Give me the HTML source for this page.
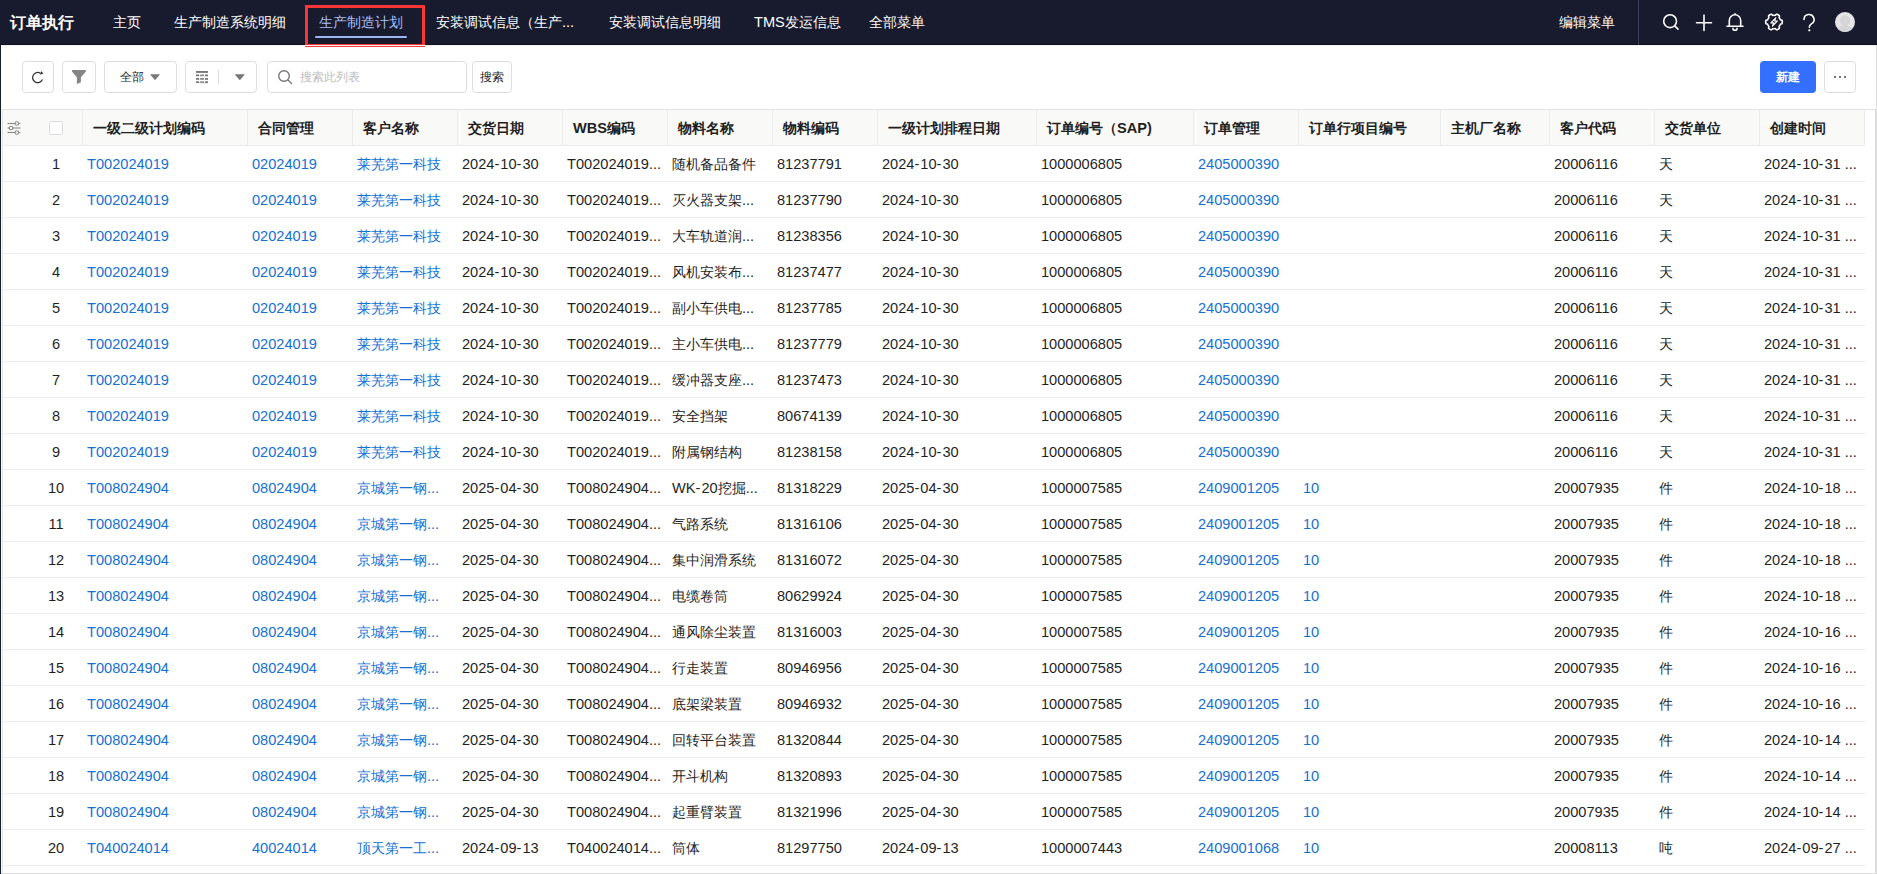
<!DOCTYPE html><html><head><meta charset="utf-8"><style>
*{box-sizing:border-box;margin:0;padding:0}
html,body{width:1877px;height:874px;overflow:hidden;background:#fff;font-family:"Liberation Sans",sans-serif;color:#1f1f1f}
#nav{position:absolute;left:0;top:0;width:1877px;height:45px;background:#181a2d;border-bottom:1px solid #0e1020}
.ni{position:absolute;top:0;height:44px;line-height:44px;font-size:14px;color:#fff;white-space:nowrap;font-weight:500}
.ni .l{font-weight:normal}
.ni .l{font-size:14.6px}
#logo{position:absolute;left:10px;top:0.8px;height:44px;line-height:44px;font-size:16px;font-weight:bold;color:#fff}
#act{color:#a8bff5}
#uline{position:absolute;left:315px;top:35.5px;width:92px;height:2.5px;border-radius:2px;background:#9db6f2}
#redbox{position:absolute;left:305px;top:5px;width:120px;height:42px;border:3px solid #f93636}
#vdiv{position:absolute;left:1638px;top:0;width:1px;height:45px;background:#3b3e56}
#lstrip{position:absolute;left:0;top:45px;width:1px;height:829px;background:#181a2d}
#rbar{position:absolute;left:1875px;top:109px;width:2px;height:765px;background:#dcdcdc}
#rbar2{position:absolute;left:1876px;top:45px;width:1px;height:64px;background:#dcdcdc}
#tline{position:absolute;left:1px;top:45px;width:1875px;height:1px;background:#f2f1ef}
#ttop{position:absolute;left:2px;top:109px;width:1873px;height:1px;background:#e3e3e3}
#hend{position:absolute;left:1864px;top:110px;width:1px;height:35px;background:#ebebeb}
#bbar{position:absolute;left:1px;top:873px;width:1876px;height:1px;background:#dcdcdc}
.btn{position:absolute;top:61px;height:32px;border:1px solid #dedede;border-radius:4px;background:#fff}
.btxt{position:absolute;font-size:12px;line-height:32px;top:-1px;color:#1f1f1f;white-space:nowrap;font-weight:500}
#newbtn{position:absolute;left:1760px;top:61px;width:56px;height:32px;border-radius:4px;background:#3370ff;color:#fff;font-size:12px;line-height:32px;text-align:center;font-weight:bold}
#tbl{position:absolute;left:2px;top:109px;width:1862px;height:757px}
#thead{position:absolute;left:0;top:0;width:1862px;height:37px;background:#f9f9f8;border-top:1px solid #e3e3e3;border-left:1px solid #e3e3e3;border-bottom:1px solid #ebebeb}
.hs{position:absolute;top:0px;width:1px;height:35px;background:#ebebeb}
.hc{position:absolute;top:1px;height:35px;line-height:35px;font-size:14px;font-weight:bold;color:#1f1f1f;white-space:nowrap}
.hc .l{font-size:14.6px}
.row{position:absolute;left:1px;width:1862px;height:36px;border-bottom:1px solid #ececec}
#tleft{position:absolute;left:2px;top:109px;width:1px;height:765px;background:#e3e3e3}
.c{position:absolute;top:0;height:35px;line-height:36px;font-size:14px;font-weight:500;white-space:nowrap;overflow:hidden;color:#1f1f1f}
.c .l{font-size:14.6px;font-weight:normal}
.h{letter-spacing:1px}
.c.a{color:#1570d2}
.idx{position:absolute;left:27px;width:52px;top:0;height:35px;line-height:36px;text-align:center;font-size:14.6px;color:#1f1f1f}
</style></head><body>
<div id="nav">
<div id="logo">订单执行</div>
<div class="ni" style="left:113px">主页</div>
<div class="ni" style="left:174px">生产制造系统明细</div>
<div class="ni" id="act" style="left:319px">生产制造计划</div>
<div class="ni" style="left:436px">安装调试信息（生产<span class="l">...</span></div>
<div class="ni" style="left:609px">安装调试信息明细</div>
<div class="ni" style="left:754px"><span class="l">TMS</span>发运信息</div>
<div class="ni" style="left:869px">全部菜单</div>
<div class="ni" style="left:1559px">编辑菜单</div>
<div id="uline"></div><div id="redbox"></div><div id="vdiv"></div>
<svg style="position:absolute;left:0;top:0" width="1877" height="45" viewBox="0 0 1877 45">
<g fill="none" stroke="#fff" stroke-width="1.6" stroke-linecap="round">
<circle cx="1670.1" cy="21.2" r="6.4"/><line x1="1674.8" y1="25.9" x2="1678" y2="29.1"/>
<line x1="1704" y1="15.3" x2="1704" y2="30.5"/><line x1="1696.5" y1="22.8" x2="1711.5" y2="22.8"/>
<path d="M1729.3 26 V20.5 a5.7 5.7 0 0 1 11.4 0 V26 M1727 26.3 H1743 M1733 28.4 a2 1.8 0 0 0 4 0 M1735 13.8 V14.8"/>
<path d="M1804 19.5 a5 5 0 1 1 7.4 4.4 c-1.6 0.9 -2.1 1.8 -2.1 3.4"/>
</g>
<circle cx="1809.3" cy="30.3" r="1.1" fill="#fff"/>
<path id="gear" d="M1782.30 22.00 L1782.30 22.22 L1782.29 22.43 L1782.27 22.65 L1782.25 22.87 L1782.22 23.08 L1782.17 23.29 L1782.10 23.50 L1781.96 23.69 L1781.68 23.84 L1781.24 23.94 L1780.81 24.02 L1780.53 24.12 L1780.37 24.26 L1780.28 24.41 L1780.20 24.57 L1780.12 24.73 L1780.05 24.89 L1779.97 25.04 L1779.89 25.20 L1779.80 25.35 L1779.71 25.50 L1779.62 25.65 L1779.52 25.80 L1779.42 25.94 L1779.32 26.08 L1779.23 26.23 L1779.14 26.39 L1779.10 26.59 L1779.15 26.89 L1779.30 27.30 L1779.44 27.73 L1779.44 28.05 L1779.35 28.26 L1779.21 28.43 L1779.05 28.58 L1778.88 28.71 L1778.70 28.84 L1778.52 28.96 L1778.34 29.08 L1778.15 29.19 L1777.96 29.29 L1777.77 29.39 L1777.57 29.49 L1777.37 29.58 L1777.17 29.66 L1776.97 29.73 L1776.75 29.76 L1776.51 29.74 L1776.24 29.57 L1775.94 29.24 L1775.66 28.90 L1775.43 28.71 L1775.23 28.65 L1775.05 28.64 L1774.88 28.65 L1774.70 28.67 L1774.53 28.68 L1774.35 28.69 L1774.18 28.70 L1774.00 28.70 L1773.82 28.70 L1773.65 28.69 L1773.47 28.68 L1773.30 28.67 L1773.12 28.65 L1772.95 28.64 L1772.77 28.65 L1772.57 28.71 L1772.34 28.90 L1772.06 29.24 L1771.76 29.57 L1771.49 29.74 L1771.25 29.76 L1771.03 29.73 L1770.83 29.66 L1770.63 29.58 L1770.43 29.49 L1770.23 29.39 L1770.04 29.29 L1769.85 29.19 L1769.66 29.08 L1769.48 28.96 L1769.30 28.84 L1769.12 28.71 L1768.95 28.58 L1768.79 28.43 L1768.65 28.26 L1768.56 28.05 L1768.56 27.73 L1768.70 27.30 L1768.85 26.89 L1768.90 26.59 L1768.86 26.39 L1768.77 26.23 L1768.68 26.08 L1768.58 25.94 L1768.48 25.80 L1768.38 25.65 L1768.29 25.50 L1768.20 25.35 L1768.11 25.20 L1768.03 25.04 L1767.95 24.89 L1767.88 24.73 L1767.80 24.57 L1767.72 24.41 L1767.63 24.26 L1767.47 24.12 L1767.19 24.02 L1766.76 23.94 L1766.32 23.84 L1766.04 23.69 L1765.90 23.50 L1765.83 23.29 L1765.78 23.08 L1765.75 22.87 L1765.73 22.65 L1765.71 22.43 L1765.70 22.22 L1765.70 22.00 L1765.70 21.78 L1765.71 21.57 L1765.73 21.35 L1765.75 21.13 L1765.78 20.92 L1765.83 20.71 L1765.90 20.50 L1766.04 20.31 L1766.32 20.16 L1766.76 20.06 L1767.19 19.98 L1767.47 19.88 L1767.63 19.74 L1767.72 19.59 L1767.80 19.43 L1767.88 19.27 L1767.95 19.11 L1768.03 18.96 L1768.11 18.80 L1768.20 18.65 L1768.29 18.50 L1768.38 18.35 L1768.48 18.20 L1768.58 18.06 L1768.68 17.92 L1768.77 17.77 L1768.86 17.61 L1768.90 17.41 L1768.85 17.11 L1768.70 16.70 L1768.56 16.27 L1768.56 15.95 L1768.65 15.74 L1768.79 15.57 L1768.95 15.42 L1769.12 15.29 L1769.30 15.16 L1769.48 15.04 L1769.66 14.92 L1769.85 14.81 L1770.04 14.71 L1770.23 14.61 L1770.43 14.51 L1770.63 14.42 L1770.83 14.34 L1771.03 14.27 L1771.25 14.24 L1771.49 14.26 L1771.76 14.43 L1772.06 14.76 L1772.34 15.10 L1772.57 15.29 L1772.77 15.35 L1772.95 15.36 L1773.12 15.35 L1773.30 15.33 L1773.47 15.32 L1773.65 15.31 L1773.82 15.30 L1774.00 15.30 L1774.18 15.30 L1774.35 15.31 L1774.53 15.32 L1774.70 15.33 L1774.88 15.35 L1775.05 15.36 L1775.23 15.35 L1775.43 15.29 L1775.66 15.10 L1775.94 14.76 L1776.24 14.43 L1776.51 14.26 L1776.75 14.24 L1776.97 14.27 L1777.17 14.34 L1777.37 14.42 L1777.57 14.51 L1777.77 14.61 L1777.96 14.71 L1778.15 14.81 L1778.34 14.92 L1778.52 15.04 L1778.70 15.16 L1778.88 15.29 L1779.05 15.42 L1779.21 15.57 L1779.35 15.74 L1779.44 15.95 L1779.44 16.27 L1779.30 16.70 L1779.15 17.11 L1779.10 17.41 L1779.14 17.61 L1779.23 17.77 L1779.32 17.92 L1779.42 18.06 L1779.52 18.20 L1779.62 18.35 L1779.71 18.50 L1779.80 18.65 L1779.89 18.80 L1779.97 18.96 L1780.05 19.11 L1780.12 19.27 L1780.20 19.43 L1780.28 19.59 L1780.37 19.74 L1780.53 19.88 L1780.81 19.98 L1781.24 20.06 L1781.68 20.16 L1781.96 20.31 L1782.10 20.50 L1782.17 20.71 L1782.22 20.92 L1782.25 21.13 L1782.27 21.35 L1782.29 21.57 L1782.30 21.78 L1782.30 22.00Z" fill="none" stroke="#fff" stroke-width="1.6" stroke-linejoin="round"/>
<path d="M1775.8 17.8 L1770.9 22.9 L1773.7 22.9 L1772.4 26.2 L1777.3 21 L1774.5 21 Z" fill="none" stroke="#fff" stroke-width="1.2" stroke-linejoin="round"/>
<circle cx="1845" cy="22" r="10" fill="#e5e5e5"/>
<g fill="#d5d4d6"><circle cx="1845" cy="20.6" r="5"/><path d="M1837.67 28.81 A8.3 6.8 0 0 1 1852.33 28.81 A10 10 0 0 1 1837.67 28.81 Z"/></g>
</svg>
</div>
<div id="lstrip"></div><div id="rbar"></div><div id="rbar2"></div><div id="bbar"></div><div id="tline"></div><div id="ttop"></div><div id="hend"></div><div id="tleft"></div>
<div class="btn" style="left:22px;width:32px"></div>
<div class="btn" style="left:62px;width:34px"></div>
<div class="btn" style="left:104px;width:73px"><div class="btxt" style="left:15px">全部</div></div>
<div class="btn" style="left:185px;width:72px"></div>
<div class="btn" style="left:267px;width:200px"><div class="btxt" style="left:32px;color:#bdbdbd;font-weight:normal">搜索此列表</div></div>
<div class="btn" style="left:472px;width:40px"><div class="btxt" style="left:7px">搜索</div></div>
<div id="newbtn">新建</div>
<div class="btn" style="left:1824px;width:32px"></div>
<svg style="position:absolute;left:0;top:45px" width="1877" height="64" viewBox="0 45 1877 64">
<path d="M40.6 73.4 A5.1 5.1 0 1 0 42.4 79.6" fill="none" stroke="#333" stroke-width="1.25"/>
<path d="M41.4 71 L43.3 73.7 L39.9 74.5 Z" fill="#333"/>
<path d="M72.1 70.1 H85.8 V71.7 L80.9 77.3 V82.3 L76.9 83.9 V77.3 L72.1 71.7 Z" fill="#858585"/>
<path d="M150 74.2 H160 L155 80.2 Z" fill="#777"/>
<g fill="#777"><rect x="196" y="71" width="12" height="1.9"/><rect x="196" y="74.5" width="3.2" height="1.8"/><rect x="200.1" y="74.5" width="3.9" height="1.8" fill="#8c8c8c"/><rect x="204.9" y="74.5" width="3.1" height="1.8"/><rect x="196" y="78.0" width="3.2" height="1.8"/><rect x="200.1" y="78.0" width="3.9" height="1.8" fill="#8c8c8c"/><rect x="204.9" y="78.0" width="3.1" height="1.8"/><rect x="196" y="81.3" width="3.2" height="1.8"/><rect x="200.1" y="81.3" width="3.9" height="1.8" fill="#8c8c8c"/><rect x="204.9" y="81.3" width="3.1" height="1.8"/></g>
<rect x="218" y="70" width="1" height="14" fill="#ddd"/>
<path d="M234.6 74.2 H245 L239.8 80.2 Z" fill="#777"/>
<circle cx="284" cy="76" r="5.3" fill="none" stroke="#777" stroke-width="1.4"/>
<line x1="288" y1="80" x2="291.5" y2="83.5" stroke="#777" stroke-width="1.4" stroke-linecap="round"/>
<g fill="#555"><circle cx="1835" cy="77" r="1.1"/><circle cx="1840" cy="77" r="1.1"/><circle cx="1845" cy="77" r="1.1"/></g>
</svg>
<div id="tbl">
<div id="thead">
<div class="hs" style="left:79px"></div>
<div class="hc" style="left:90px">一级二级计划编码</div>
<div class="hs" style="left:244px"></div>
<div class="hc" style="left:255px">合同管理</div>
<div class="hs" style="left:349px"></div>
<div class="hc" style="left:360px">客户名称</div>
<div class="hs" style="left:454px"></div>
<div class="hc" style="left:465px">交货日期</div>
<div class="hs" style="left:559px"></div>
<div class="hc" style="left:570px"><span class="l">WBS</span>编码</div>
<div class="hs" style="left:664px"></div>
<div class="hc" style="left:675px">物料名称</div>
<div class="hs" style="left:769px"></div>
<div class="hc" style="left:780px">物料编码</div>
<div class="hs" style="left:874px"></div>
<div class="hc" style="left:885px">一级计划排程日期</div>
<div class="hs" style="left:1033px"></div>
<div class="hc" style="left:1044px">订单编号（<span class="l">SAP)</span></div>
<div class="hs" style="left:1190px"></div>
<div class="hc" style="left:1201px">订单管理</div>
<div class="hs" style="left:1295px"></div>
<div class="hc" style="left:1306px">订单行项目编号</div>
<div class="hs" style="left:1437px"></div>
<div class="hc" style="left:1448px">主机厂名称</div>
<div class="hs" style="left:1546px"></div>
<div class="hc" style="left:1557px">客户代码</div>
<div class="hs" style="left:1651px"></div>
<div class="hc" style="left:1662px">交货单位</div>
<div class="hs" style="left:1756px"></div>
<div class="hc" style="left:1767px">创建时间</div>
<svg style="position:absolute;left:-1px;top:-1px" width="80" height="37" viewBox="2 109 80 37">
<g stroke="#888" stroke-width="1.1" fill="none">
<line x1="7.5" y1="123.5" x2="20.5" y2="123.5"/><line x1="7.5" y1="128" x2="20.5" y2="128"/><line x1="7.5" y1="132.5" x2="20.5" y2="132.5"/>
</g>
<g stroke="#888" stroke-width="1.1" fill="#f9f9f8">
<circle cx="16.8" cy="123.5" r="1.8"/><circle cx="11" cy="128" r="1.8"/><circle cx="16.8" cy="132.5" r="1.8"/>
</g>
<rect x="49.5" y="121.5" width="13" height="13" rx="2" fill="#fff" stroke="#dadada"/>
</svg>
</div>
<div class="row" style="top:37px">
<div class="idx">1</div>
<div class="c a" style="left:84px;width:159px"><span class="l">T002024019</span></div>
<div class="c a" style="left:249px;width:99px"><span class="l">02024019</span></div>
<div class="c a" style="left:354px;width:99px">莱芜第一科技</div>
<div class="c" style="left:459px;width:99px"><span class="l">2024<span class="h">-</span>10<span class="h">-</span>30</span></div>
<div class="c" style="left:564px;width:99px"><span class="l">T002024019...</span></div>
<div class="c" style="left:669px;width:99px">随机备品备件</div>
<div class="c" style="left:774px;width:99px"><span class="l">81237791</span></div>
<div class="c" style="left:879px;width:154px"><span class="l">2024<span class="h">-</span>10<span class="h">-</span>30</span></div>
<div class="c" style="left:1038px;width:151px"><span class="l">1000006805</span></div>
<div class="c a" style="left:1195px;width:99px"><span class="l">2405000390</span></div>
<div class="c" style="left:1551px;width:99px"><span class="l">20006116</span></div>
<div class="c" style="left:1656px;width:99px">天</div>
<div class="c" style="left:1761px;width:99px"><span class="l">2024<span class="h">-</span>10<span class="h">-</span>31 ...</span></div>
</div>
<div class="row" style="top:73px">
<div class="idx">2</div>
<div class="c a" style="left:84px;width:159px"><span class="l">T002024019</span></div>
<div class="c a" style="left:249px;width:99px"><span class="l">02024019</span></div>
<div class="c a" style="left:354px;width:99px">莱芜第一科技</div>
<div class="c" style="left:459px;width:99px"><span class="l">2024<span class="h">-</span>10<span class="h">-</span>30</span></div>
<div class="c" style="left:564px;width:99px"><span class="l">T002024019...</span></div>
<div class="c" style="left:669px;width:99px">灭火器支架<span class="l">...</span></div>
<div class="c" style="left:774px;width:99px"><span class="l">81237790</span></div>
<div class="c" style="left:879px;width:154px"><span class="l">2024<span class="h">-</span>10<span class="h">-</span>30</span></div>
<div class="c" style="left:1038px;width:151px"><span class="l">1000006805</span></div>
<div class="c a" style="left:1195px;width:99px"><span class="l">2405000390</span></div>
<div class="c" style="left:1551px;width:99px"><span class="l">20006116</span></div>
<div class="c" style="left:1656px;width:99px">天</div>
<div class="c" style="left:1761px;width:99px"><span class="l">2024<span class="h">-</span>10<span class="h">-</span>31 ...</span></div>
</div>
<div class="row" style="top:109px">
<div class="idx">3</div>
<div class="c a" style="left:84px;width:159px"><span class="l">T002024019</span></div>
<div class="c a" style="left:249px;width:99px"><span class="l">02024019</span></div>
<div class="c a" style="left:354px;width:99px">莱芜第一科技</div>
<div class="c" style="left:459px;width:99px"><span class="l">2024<span class="h">-</span>10<span class="h">-</span>30</span></div>
<div class="c" style="left:564px;width:99px"><span class="l">T002024019...</span></div>
<div class="c" style="left:669px;width:99px">大车轨道润<span class="l">...</span></div>
<div class="c" style="left:774px;width:99px"><span class="l">81238356</span></div>
<div class="c" style="left:879px;width:154px"><span class="l">2024<span class="h">-</span>10<span class="h">-</span>30</span></div>
<div class="c" style="left:1038px;width:151px"><span class="l">1000006805</span></div>
<div class="c a" style="left:1195px;width:99px"><span class="l">2405000390</span></div>
<div class="c" style="left:1551px;width:99px"><span class="l">20006116</span></div>
<div class="c" style="left:1656px;width:99px">天</div>
<div class="c" style="left:1761px;width:99px"><span class="l">2024<span class="h">-</span>10<span class="h">-</span>31 ...</span></div>
</div>
<div class="row" style="top:145px">
<div class="idx">4</div>
<div class="c a" style="left:84px;width:159px"><span class="l">T002024019</span></div>
<div class="c a" style="left:249px;width:99px"><span class="l">02024019</span></div>
<div class="c a" style="left:354px;width:99px">莱芜第一科技</div>
<div class="c" style="left:459px;width:99px"><span class="l">2024<span class="h">-</span>10<span class="h">-</span>30</span></div>
<div class="c" style="left:564px;width:99px"><span class="l">T002024019...</span></div>
<div class="c" style="left:669px;width:99px">风机安装布<span class="l">...</span></div>
<div class="c" style="left:774px;width:99px"><span class="l">81237477</span></div>
<div class="c" style="left:879px;width:154px"><span class="l">2024<span class="h">-</span>10<span class="h">-</span>30</span></div>
<div class="c" style="left:1038px;width:151px"><span class="l">1000006805</span></div>
<div class="c a" style="left:1195px;width:99px"><span class="l">2405000390</span></div>
<div class="c" style="left:1551px;width:99px"><span class="l">20006116</span></div>
<div class="c" style="left:1656px;width:99px">天</div>
<div class="c" style="left:1761px;width:99px"><span class="l">2024<span class="h">-</span>10<span class="h">-</span>31 ...</span></div>
</div>
<div class="row" style="top:181px">
<div class="idx">5</div>
<div class="c a" style="left:84px;width:159px"><span class="l">T002024019</span></div>
<div class="c a" style="left:249px;width:99px"><span class="l">02024019</span></div>
<div class="c a" style="left:354px;width:99px">莱芜第一科技</div>
<div class="c" style="left:459px;width:99px"><span class="l">2024<span class="h">-</span>10<span class="h">-</span>30</span></div>
<div class="c" style="left:564px;width:99px"><span class="l">T002024019...</span></div>
<div class="c" style="left:669px;width:99px">副小车供电<span class="l">...</span></div>
<div class="c" style="left:774px;width:99px"><span class="l">81237785</span></div>
<div class="c" style="left:879px;width:154px"><span class="l">2024<span class="h">-</span>10<span class="h">-</span>30</span></div>
<div class="c" style="left:1038px;width:151px"><span class="l">1000006805</span></div>
<div class="c a" style="left:1195px;width:99px"><span class="l">2405000390</span></div>
<div class="c" style="left:1551px;width:99px"><span class="l">20006116</span></div>
<div class="c" style="left:1656px;width:99px">天</div>
<div class="c" style="left:1761px;width:99px"><span class="l">2024<span class="h">-</span>10<span class="h">-</span>31 ...</span></div>
</div>
<div class="row" style="top:217px">
<div class="idx">6</div>
<div class="c a" style="left:84px;width:159px"><span class="l">T002024019</span></div>
<div class="c a" style="left:249px;width:99px"><span class="l">02024019</span></div>
<div class="c a" style="left:354px;width:99px">莱芜第一科技</div>
<div class="c" style="left:459px;width:99px"><span class="l">2024<span class="h">-</span>10<span class="h">-</span>30</span></div>
<div class="c" style="left:564px;width:99px"><span class="l">T002024019...</span></div>
<div class="c" style="left:669px;width:99px">主小车供电<span class="l">...</span></div>
<div class="c" style="left:774px;width:99px"><span class="l">81237779</span></div>
<div class="c" style="left:879px;width:154px"><span class="l">2024<span class="h">-</span>10<span class="h">-</span>30</span></div>
<div class="c" style="left:1038px;width:151px"><span class="l">1000006805</span></div>
<div class="c a" style="left:1195px;width:99px"><span class="l">2405000390</span></div>
<div class="c" style="left:1551px;width:99px"><span class="l">20006116</span></div>
<div class="c" style="left:1656px;width:99px">天</div>
<div class="c" style="left:1761px;width:99px"><span class="l">2024<span class="h">-</span>10<span class="h">-</span>31 ...</span></div>
</div>
<div class="row" style="top:253px">
<div class="idx">7</div>
<div class="c a" style="left:84px;width:159px"><span class="l">T002024019</span></div>
<div class="c a" style="left:249px;width:99px"><span class="l">02024019</span></div>
<div class="c a" style="left:354px;width:99px">莱芜第一科技</div>
<div class="c" style="left:459px;width:99px"><span class="l">2024<span class="h">-</span>10<span class="h">-</span>30</span></div>
<div class="c" style="left:564px;width:99px"><span class="l">T002024019...</span></div>
<div class="c" style="left:669px;width:99px">缓冲器支座<span class="l">...</span></div>
<div class="c" style="left:774px;width:99px"><span class="l">81237473</span></div>
<div class="c" style="left:879px;width:154px"><span class="l">2024<span class="h">-</span>10<span class="h">-</span>30</span></div>
<div class="c" style="left:1038px;width:151px"><span class="l">1000006805</span></div>
<div class="c a" style="left:1195px;width:99px"><span class="l">2405000390</span></div>
<div class="c" style="left:1551px;width:99px"><span class="l">20006116</span></div>
<div class="c" style="left:1656px;width:99px">天</div>
<div class="c" style="left:1761px;width:99px"><span class="l">2024<span class="h">-</span>10<span class="h">-</span>31 ...</span></div>
</div>
<div class="row" style="top:289px">
<div class="idx">8</div>
<div class="c a" style="left:84px;width:159px"><span class="l">T002024019</span></div>
<div class="c a" style="left:249px;width:99px"><span class="l">02024019</span></div>
<div class="c a" style="left:354px;width:99px">莱芜第一科技</div>
<div class="c" style="left:459px;width:99px"><span class="l">2024<span class="h">-</span>10<span class="h">-</span>30</span></div>
<div class="c" style="left:564px;width:99px"><span class="l">T002024019...</span></div>
<div class="c" style="left:669px;width:99px">安全挡架</div>
<div class="c" style="left:774px;width:99px"><span class="l">80674139</span></div>
<div class="c" style="left:879px;width:154px"><span class="l">2024<span class="h">-</span>10<span class="h">-</span>30</span></div>
<div class="c" style="left:1038px;width:151px"><span class="l">1000006805</span></div>
<div class="c a" style="left:1195px;width:99px"><span class="l">2405000390</span></div>
<div class="c" style="left:1551px;width:99px"><span class="l">20006116</span></div>
<div class="c" style="left:1656px;width:99px">天</div>
<div class="c" style="left:1761px;width:99px"><span class="l">2024<span class="h">-</span>10<span class="h">-</span>31 ...</span></div>
</div>
<div class="row" style="top:325px">
<div class="idx">9</div>
<div class="c a" style="left:84px;width:159px"><span class="l">T002024019</span></div>
<div class="c a" style="left:249px;width:99px"><span class="l">02024019</span></div>
<div class="c a" style="left:354px;width:99px">莱芜第一科技</div>
<div class="c" style="left:459px;width:99px"><span class="l">2024<span class="h">-</span>10<span class="h">-</span>30</span></div>
<div class="c" style="left:564px;width:99px"><span class="l">T002024019...</span></div>
<div class="c" style="left:669px;width:99px">附属钢结构</div>
<div class="c" style="left:774px;width:99px"><span class="l">81238158</span></div>
<div class="c" style="left:879px;width:154px"><span class="l">2024<span class="h">-</span>10<span class="h">-</span>30</span></div>
<div class="c" style="left:1038px;width:151px"><span class="l">1000006805</span></div>
<div class="c a" style="left:1195px;width:99px"><span class="l">2405000390</span></div>
<div class="c" style="left:1551px;width:99px"><span class="l">20006116</span></div>
<div class="c" style="left:1656px;width:99px">天</div>
<div class="c" style="left:1761px;width:99px"><span class="l">2024<span class="h">-</span>10<span class="h">-</span>31 ...</span></div>
</div>
<div class="row" style="top:361px">
<div class="idx">10</div>
<div class="c a" style="left:84px;width:159px"><span class="l">T008024904</span></div>
<div class="c a" style="left:249px;width:99px"><span class="l">08024904</span></div>
<div class="c a" style="left:354px;width:99px">京城第一钢<span class="l">...</span></div>
<div class="c" style="left:459px;width:99px"><span class="l">2025<span class="h">-</span>04<span class="h">-</span>30</span></div>
<div class="c" style="left:564px;width:99px"><span class="l">T008024904...</span></div>
<div class="c" style="left:669px;width:99px"><span class="l">WK<span class="h">-</span>20</span>挖掘<span class="l">...</span></div>
<div class="c" style="left:774px;width:99px"><span class="l">81318229</span></div>
<div class="c" style="left:879px;width:154px"><span class="l">2025<span class="h">-</span>04<span class="h">-</span>30</span></div>
<div class="c" style="left:1038px;width:151px"><span class="l">1000007585</span></div>
<div class="c a" style="left:1195px;width:99px"><span class="l">2409001205</span></div>
<div class="c a" style="left:1300px;width:136px"><span class="l">10</span></div>
<div class="c" style="left:1551px;width:99px"><span class="l">20007935</span></div>
<div class="c" style="left:1656px;width:99px">件</div>
<div class="c" style="left:1761px;width:99px"><span class="l">2024<span class="h">-</span>10<span class="h">-</span>18 ...</span></div>
</div>
<div class="row" style="top:397px">
<div class="idx">11</div>
<div class="c a" style="left:84px;width:159px"><span class="l">T008024904</span></div>
<div class="c a" style="left:249px;width:99px"><span class="l">08024904</span></div>
<div class="c a" style="left:354px;width:99px">京城第一钢<span class="l">...</span></div>
<div class="c" style="left:459px;width:99px"><span class="l">2025<span class="h">-</span>04<span class="h">-</span>30</span></div>
<div class="c" style="left:564px;width:99px"><span class="l">T008024904...</span></div>
<div class="c" style="left:669px;width:99px">气路系统</div>
<div class="c" style="left:774px;width:99px"><span class="l">81316106</span></div>
<div class="c" style="left:879px;width:154px"><span class="l">2025<span class="h">-</span>04<span class="h">-</span>30</span></div>
<div class="c" style="left:1038px;width:151px"><span class="l">1000007585</span></div>
<div class="c a" style="left:1195px;width:99px"><span class="l">2409001205</span></div>
<div class="c a" style="left:1300px;width:136px"><span class="l">10</span></div>
<div class="c" style="left:1551px;width:99px"><span class="l">20007935</span></div>
<div class="c" style="left:1656px;width:99px">件</div>
<div class="c" style="left:1761px;width:99px"><span class="l">2024<span class="h">-</span>10<span class="h">-</span>18 ...</span></div>
</div>
<div class="row" style="top:433px">
<div class="idx">12</div>
<div class="c a" style="left:84px;width:159px"><span class="l">T008024904</span></div>
<div class="c a" style="left:249px;width:99px"><span class="l">08024904</span></div>
<div class="c a" style="left:354px;width:99px">京城第一钢<span class="l">...</span></div>
<div class="c" style="left:459px;width:99px"><span class="l">2025<span class="h">-</span>04<span class="h">-</span>30</span></div>
<div class="c" style="left:564px;width:99px"><span class="l">T008024904...</span></div>
<div class="c" style="left:669px;width:99px">集中润滑系统</div>
<div class="c" style="left:774px;width:99px"><span class="l">81316072</span></div>
<div class="c" style="left:879px;width:154px"><span class="l">2025<span class="h">-</span>04<span class="h">-</span>30</span></div>
<div class="c" style="left:1038px;width:151px"><span class="l">1000007585</span></div>
<div class="c a" style="left:1195px;width:99px"><span class="l">2409001205</span></div>
<div class="c a" style="left:1300px;width:136px"><span class="l">10</span></div>
<div class="c" style="left:1551px;width:99px"><span class="l">20007935</span></div>
<div class="c" style="left:1656px;width:99px">件</div>
<div class="c" style="left:1761px;width:99px"><span class="l">2024<span class="h">-</span>10<span class="h">-</span>18 ...</span></div>
</div>
<div class="row" style="top:469px">
<div class="idx">13</div>
<div class="c a" style="left:84px;width:159px"><span class="l">T008024904</span></div>
<div class="c a" style="left:249px;width:99px"><span class="l">08024904</span></div>
<div class="c a" style="left:354px;width:99px">京城第一钢<span class="l">...</span></div>
<div class="c" style="left:459px;width:99px"><span class="l">2025<span class="h">-</span>04<span class="h">-</span>30</span></div>
<div class="c" style="left:564px;width:99px"><span class="l">T008024904...</span></div>
<div class="c" style="left:669px;width:99px">电缆卷筒</div>
<div class="c" style="left:774px;width:99px"><span class="l">80629924</span></div>
<div class="c" style="left:879px;width:154px"><span class="l">2025<span class="h">-</span>04<span class="h">-</span>30</span></div>
<div class="c" style="left:1038px;width:151px"><span class="l">1000007585</span></div>
<div class="c a" style="left:1195px;width:99px"><span class="l">2409001205</span></div>
<div class="c a" style="left:1300px;width:136px"><span class="l">10</span></div>
<div class="c" style="left:1551px;width:99px"><span class="l">20007935</span></div>
<div class="c" style="left:1656px;width:99px">件</div>
<div class="c" style="left:1761px;width:99px"><span class="l">2024<span class="h">-</span>10<span class="h">-</span>18 ...</span></div>
</div>
<div class="row" style="top:505px">
<div class="idx">14</div>
<div class="c a" style="left:84px;width:159px"><span class="l">T008024904</span></div>
<div class="c a" style="left:249px;width:99px"><span class="l">08024904</span></div>
<div class="c a" style="left:354px;width:99px">京城第一钢<span class="l">...</span></div>
<div class="c" style="left:459px;width:99px"><span class="l">2025<span class="h">-</span>04<span class="h">-</span>30</span></div>
<div class="c" style="left:564px;width:99px"><span class="l">T008024904...</span></div>
<div class="c" style="left:669px;width:99px">通风除尘装置</div>
<div class="c" style="left:774px;width:99px"><span class="l">81316003</span></div>
<div class="c" style="left:879px;width:154px"><span class="l">2025<span class="h">-</span>04<span class="h">-</span>30</span></div>
<div class="c" style="left:1038px;width:151px"><span class="l">1000007585</span></div>
<div class="c a" style="left:1195px;width:99px"><span class="l">2409001205</span></div>
<div class="c a" style="left:1300px;width:136px"><span class="l">10</span></div>
<div class="c" style="left:1551px;width:99px"><span class="l">20007935</span></div>
<div class="c" style="left:1656px;width:99px">件</div>
<div class="c" style="left:1761px;width:99px"><span class="l">2024<span class="h">-</span>10<span class="h">-</span>16 ...</span></div>
</div>
<div class="row" style="top:541px">
<div class="idx">15</div>
<div class="c a" style="left:84px;width:159px"><span class="l">T008024904</span></div>
<div class="c a" style="left:249px;width:99px"><span class="l">08024904</span></div>
<div class="c a" style="left:354px;width:99px">京城第一钢<span class="l">...</span></div>
<div class="c" style="left:459px;width:99px"><span class="l">2025<span class="h">-</span>04<span class="h">-</span>30</span></div>
<div class="c" style="left:564px;width:99px"><span class="l">T008024904...</span></div>
<div class="c" style="left:669px;width:99px">行走装置</div>
<div class="c" style="left:774px;width:99px"><span class="l">80946956</span></div>
<div class="c" style="left:879px;width:154px"><span class="l">2025<span class="h">-</span>04<span class="h">-</span>30</span></div>
<div class="c" style="left:1038px;width:151px"><span class="l">1000007585</span></div>
<div class="c a" style="left:1195px;width:99px"><span class="l">2409001205</span></div>
<div class="c a" style="left:1300px;width:136px"><span class="l">10</span></div>
<div class="c" style="left:1551px;width:99px"><span class="l">20007935</span></div>
<div class="c" style="left:1656px;width:99px">件</div>
<div class="c" style="left:1761px;width:99px"><span class="l">2024<span class="h">-</span>10<span class="h">-</span>16 ...</span></div>
</div>
<div class="row" style="top:577px">
<div class="idx">16</div>
<div class="c a" style="left:84px;width:159px"><span class="l">T008024904</span></div>
<div class="c a" style="left:249px;width:99px"><span class="l">08024904</span></div>
<div class="c a" style="left:354px;width:99px">京城第一钢<span class="l">...</span></div>
<div class="c" style="left:459px;width:99px"><span class="l">2025<span class="h">-</span>04<span class="h">-</span>30</span></div>
<div class="c" style="left:564px;width:99px"><span class="l">T008024904...</span></div>
<div class="c" style="left:669px;width:99px">底架梁装置</div>
<div class="c" style="left:774px;width:99px"><span class="l">80946932</span></div>
<div class="c" style="left:879px;width:154px"><span class="l">2025<span class="h">-</span>04<span class="h">-</span>30</span></div>
<div class="c" style="left:1038px;width:151px"><span class="l">1000007585</span></div>
<div class="c a" style="left:1195px;width:99px"><span class="l">2409001205</span></div>
<div class="c a" style="left:1300px;width:136px"><span class="l">10</span></div>
<div class="c" style="left:1551px;width:99px"><span class="l">20007935</span></div>
<div class="c" style="left:1656px;width:99px">件</div>
<div class="c" style="left:1761px;width:99px"><span class="l">2024<span class="h">-</span>10<span class="h">-</span>16 ...</span></div>
</div>
<div class="row" style="top:613px">
<div class="idx">17</div>
<div class="c a" style="left:84px;width:159px"><span class="l">T008024904</span></div>
<div class="c a" style="left:249px;width:99px"><span class="l">08024904</span></div>
<div class="c a" style="left:354px;width:99px">京城第一钢<span class="l">...</span></div>
<div class="c" style="left:459px;width:99px"><span class="l">2025<span class="h">-</span>04<span class="h">-</span>30</span></div>
<div class="c" style="left:564px;width:99px"><span class="l">T008024904...</span></div>
<div class="c" style="left:669px;width:99px">回转平台装置</div>
<div class="c" style="left:774px;width:99px"><span class="l">81320844</span></div>
<div class="c" style="left:879px;width:154px"><span class="l">2025<span class="h">-</span>04<span class="h">-</span>30</span></div>
<div class="c" style="left:1038px;width:151px"><span class="l">1000007585</span></div>
<div class="c a" style="left:1195px;width:99px"><span class="l">2409001205</span></div>
<div class="c a" style="left:1300px;width:136px"><span class="l">10</span></div>
<div class="c" style="left:1551px;width:99px"><span class="l">20007935</span></div>
<div class="c" style="left:1656px;width:99px">件</div>
<div class="c" style="left:1761px;width:99px"><span class="l">2024<span class="h">-</span>10<span class="h">-</span>14 ...</span></div>
</div>
<div class="row" style="top:649px">
<div class="idx">18</div>
<div class="c a" style="left:84px;width:159px"><span class="l">T008024904</span></div>
<div class="c a" style="left:249px;width:99px"><span class="l">08024904</span></div>
<div class="c a" style="left:354px;width:99px">京城第一钢<span class="l">...</span></div>
<div class="c" style="left:459px;width:99px"><span class="l">2025<span class="h">-</span>04<span class="h">-</span>30</span></div>
<div class="c" style="left:564px;width:99px"><span class="l">T008024904...</span></div>
<div class="c" style="left:669px;width:99px">开斗机构</div>
<div class="c" style="left:774px;width:99px"><span class="l">81320893</span></div>
<div class="c" style="left:879px;width:154px"><span class="l">2025<span class="h">-</span>04<span class="h">-</span>30</span></div>
<div class="c" style="left:1038px;width:151px"><span class="l">1000007585</span></div>
<div class="c a" style="left:1195px;width:99px"><span class="l">2409001205</span></div>
<div class="c a" style="left:1300px;width:136px"><span class="l">10</span></div>
<div class="c" style="left:1551px;width:99px"><span class="l">20007935</span></div>
<div class="c" style="left:1656px;width:99px">件</div>
<div class="c" style="left:1761px;width:99px"><span class="l">2024<span class="h">-</span>10<span class="h">-</span>14 ...</span></div>
</div>
<div class="row" style="top:685px">
<div class="idx">19</div>
<div class="c a" style="left:84px;width:159px"><span class="l">T008024904</span></div>
<div class="c a" style="left:249px;width:99px"><span class="l">08024904</span></div>
<div class="c a" style="left:354px;width:99px">京城第一钢<span class="l">...</span></div>
<div class="c" style="left:459px;width:99px"><span class="l">2025<span class="h">-</span>04<span class="h">-</span>30</span></div>
<div class="c" style="left:564px;width:99px"><span class="l">T008024904...</span></div>
<div class="c" style="left:669px;width:99px">起重臂装置</div>
<div class="c" style="left:774px;width:99px"><span class="l">81321996</span></div>
<div class="c" style="left:879px;width:154px"><span class="l">2025<span class="h">-</span>04<span class="h">-</span>30</span></div>
<div class="c" style="left:1038px;width:151px"><span class="l">1000007585</span></div>
<div class="c a" style="left:1195px;width:99px"><span class="l">2409001205</span></div>
<div class="c a" style="left:1300px;width:136px"><span class="l">10</span></div>
<div class="c" style="left:1551px;width:99px"><span class="l">20007935</span></div>
<div class="c" style="left:1656px;width:99px">件</div>
<div class="c" style="left:1761px;width:99px"><span class="l">2024<span class="h">-</span>10<span class="h">-</span>14 ...</span></div>
</div>
<div class="row" style="top:721px">
<div class="idx">20</div>
<div class="c a" style="left:84px;width:159px"><span class="l">T040024014</span></div>
<div class="c a" style="left:249px;width:99px"><span class="l">40024014</span></div>
<div class="c a" style="left:354px;width:99px">顶天第一工<span class="l">...</span></div>
<div class="c" style="left:459px;width:99px"><span class="l">2024<span class="h">-</span>09<span class="h">-</span>13</span></div>
<div class="c" style="left:564px;width:99px"><span class="l">T040024014...</span></div>
<div class="c" style="left:669px;width:99px">筒体</div>
<div class="c" style="left:774px;width:99px"><span class="l">81297750</span></div>
<div class="c" style="left:879px;width:154px"><span class="l">2024<span class="h">-</span>09<span class="h">-</span>13</span></div>
<div class="c" style="left:1038px;width:151px"><span class="l">1000007443</span></div>
<div class="c a" style="left:1195px;width:99px"><span class="l">2409001068</span></div>
<div class="c a" style="left:1300px;width:136px"><span class="l">10</span></div>
<div class="c" style="left:1551px;width:99px"><span class="l">20008113</span></div>
<div class="c" style="left:1656px;width:99px">吨</div>
<div class="c" style="left:1761px;width:99px"><span class="l">2024<span class="h">-</span>09<span class="h">-</span>27 ...</span></div>
</div>
</div>
</body></html>
